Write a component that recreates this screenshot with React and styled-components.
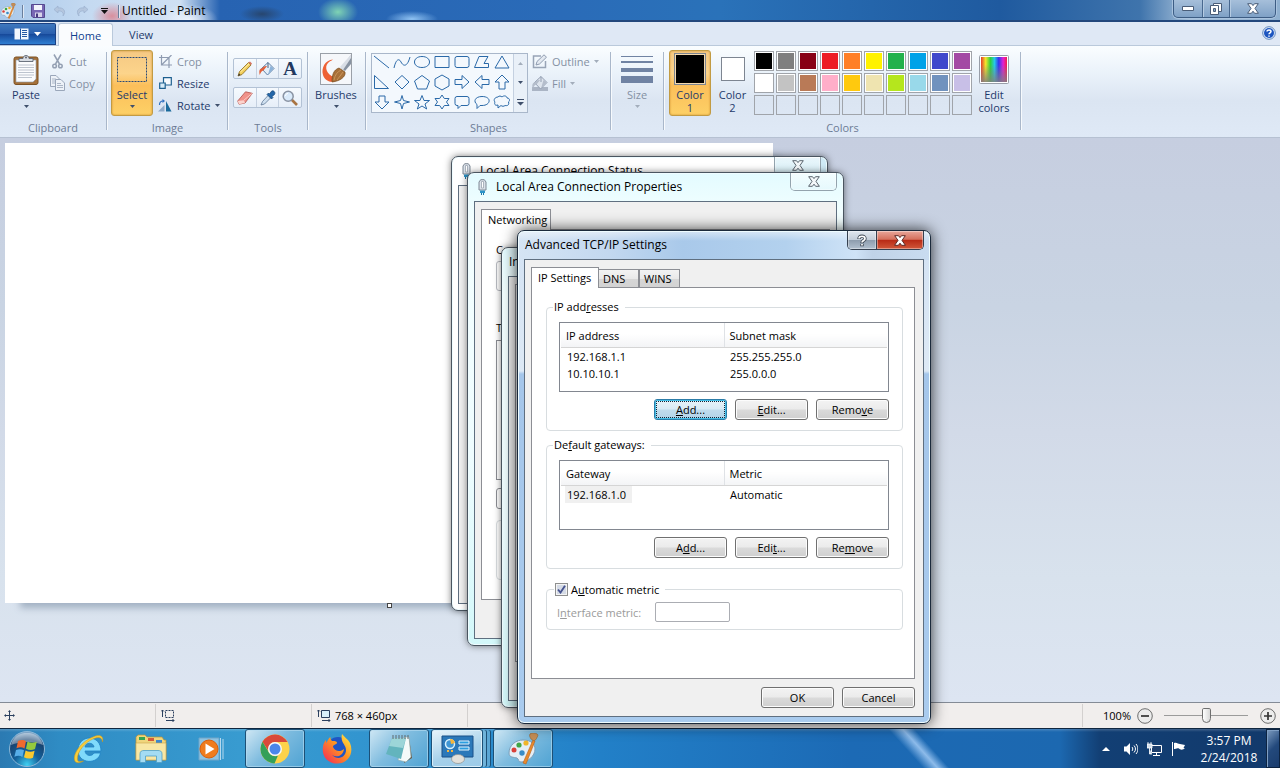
import React from "react";
import styled, { createGlobalStyle, css } from "styled-components";

const Global = createGlobalStyle`
  *, *::before, *::after { box-sizing: border-box; }
  html, body { margin: 0; height: 100%; overflow: hidden; }
  #root { height: 100%; }
  body, button, input {
    font-family: "Open Sans", "Noto Sans", sans-serif;
    font-size: 11px;
    line-height: 13px;
    color: #000;
  }
  button { padding: 0; margin: 0; border: 0; background: none; }
  svg { display: block; flex: none; }
`;

const Desktop = styled.div`
  position: relative;
  display: flex;
  flex-direction: column;
  height: 100%;
  overflow: hidden;
`;

/* ---------- Paint title bar ---------- */

const TitleBar = styled.header`
  display: flex;
  justify-content: space-between;
  height: 22px;
  flex: none;
  border-bottom: 2px solid #23477c;
  background:
    radial-gradient(ellipse 30px 16px at 188px 20px, #eef4fc, transparent),
    radial-gradient(ellipse 20px 14px at 112px 16px, #d98f9d, transparent),
    radial-gradient(ellipse 20px 14px at 338px 12px, #7fd3b4, transparent),
    radial-gradient(ellipse 26px 8px at 412px 19px, #8fc2f2, transparent),
    radial-gradient(ellipse 22px 8px at 262px 14px, #27466f, transparent),
    linear-gradient(90deg, #a9c8ea 0, #c5daf1 90px, #cfe0f3 180px, #2763b2 220px, #2a6bb8 560px, #2a72b9 720px, #1f5a9f 1000px, #3f74ac 1140px, #a5bfd9 1190px, #8fb0d0 100%);
`;

const QuickAccess = styled.div`
  display: flex;
  align-items: center;
  gap: 6px;
  padding-top: 2px;
`;

const QuickButton = styled.button`
  display: flex;
  width: 16px;
  justify-content: center;
`;

const QuickDivider = styled.span`
  width: 2px;
  height: 13px;
  background: linear-gradient(90deg, #6a7f9d 50%, #dfe9f5 50%);
`;

const AppTitle = styled.h1`
  margin: 0;
  margin-left: -4px;
  font-size: 12px;
  font-weight: 400;
  line-height: 16px;
  white-space: nowrap;
`;

const Caption = styled.div`
  display: flex;
  height: 18px;
  margin-right: 4px;
  border: 1px solid #3d5d84;
  border-top: 0;
  border-radius: 0 0 5px 5px;
  overflow: hidden;
  background: linear-gradient(#a6bfda, #7fa1c6);
  box-shadow: 0 0 0 1px #a9c3df;
`;

const CaptionButton = styled.button`
  display: flex;
  align-items: center;
  justify-content: center;
  width: ${(p) => p.$w}px;
  & + & { border-left: 1px solid #48688f; box-shadow: inset 1px 0 #b5cbe2; }
`;

/* ---------- Ribbon ---------- */

const TabStrip = styled.nav`
  display: flex;
  align-items: flex-end;
  height: 24px;
  flex: none;
  background: #dfe8f5;
  border-bottom: 1px solid #bac9db;
`;

const FileButton = styled.button`
  display: flex;
  align-items: center;
  justify-content: center;
  gap: 5px;
  width: 56px;
  height: 22px;
  border: 1px solid #1a4184;
  border-left: 0;
  border-radius: 0 2px 0 0;
  background: linear-gradient(#3f78bd, #2a5fae 48%, #174a9b 52%, #2f7fd2);
`;

const RibbonTab = styled.button`
  height: 23px;
  margin: 0 0 -1px 2px;
  padding: 0 ${(p) => (p.$active ? 11 : 13)}px;
  color: #1e3a6b;
  border: 1px solid transparent;
  ${(p) =>
    p.$active &&
    css`
      color: #10408f;
      background: #fafcfe;
      border-color: #bac9db;
      border-bottom: 0;
      border-radius: 3px 3px 0 0;
    `}
`;

const HelpButton = styled.button`
  margin: 0 4px 5px auto;
`;

const Ribbon = styled.section`
  display: flex;
  align-items: stretch;
  height: 92px;
  flex: none;
  padding-top: 4px;
  border-bottom: 1px solid #b6c1d2;
  background: linear-gradient(#fafdff 0, #eaf2fa 30%, #dbe5f2 60%, #dfe9f6 100%);
`;

const Group = styled.div`
  display: flex;
  flex-direction: column;
  width: ${(p) => p.$w}px;
  flex: none;
`;

const GroupBody = styled.div`
  display: flex;
  height: 66px;
  padding-left: ${(p) => p.$pad ?? 4}px;
  gap: ${(p) => p.$gap ?? 4}px;
  align-items: flex-start;
`;

const GroupLabel = styled.div`
  padding-top: 5px;
  text-align: center;
  color: #6d7c95;
`;

const Separator = styled.div`
  width: 2px;
  height: 78px;
  margin-top: 2px;
  flex: none;
  background: linear-gradient(90deg, #a9b7ca 50%, #f7fafd 50%);
`;

const BigButton = styled.button`
  display: flex;
  flex-direction: column;
  align-items: center;
  width: ${(p) => p.$w ?? 42}px;
  height: 66px;
  padding-top: 2px;
  color: ${(p) => (p.$dim ? "#8490a3" : "#1e3a6b")};
  border: 1px solid transparent;
  border-radius: 3px;
  ${(p) =>
    p.$active &&
    css`
      border-color: #c29b43;
      background: linear-gradient(#f5c983 0, #fcd48b 35%, #fbbf5a 54%, #fdd066 100%);
      box-shadow: inset 0 0 2px #c98a2b;
    `}
`;

const BigIcon = styled.span`
  display: flex;
  align-items: center;
  justify-content: center;
  height: 32px;
  margin-bottom: 3px;
`;

const ArrowGap = styled.span`
  display: block;
  padding-top: 4px;
`;

const SmallStack = styled.div`
  display: flex;
  flex-direction: column;
`;

const SmallButton = styled.button`
  display: flex;
  align-items: center;
  gap: 4px;
  height: 22px;
  color: ${(p) => (p.$dim ? "#8490a3" : "#1e3a6b")};
`;

const SmallIcon = styled.span`
  display: flex;
  justify-content: center;
  width: 16px;
`;

const ToolGrid = styled.div`
  display: flex;
  flex-direction: column;
  gap: 8px;
  padding-top: 8px;
`;

const ToolRow = styled.div`
  display: flex;
  width: 69px;
  height: 21px;
  border: 1px solid #b3c2d5;
  border-radius: 2px;
  background: linear-gradient(#f6fafe, #e6eef8);
`;

const Tool = styled.button`
  display: flex;
  flex: 1;
  align-items: center;
  justify-content: center;
  & + & { border-left: 1px solid #c4d0e0; }
`;

const LetterTool = styled.span`
  font: 700 19px/19px "Liberation Serif", serif;
  color: #22385f;
`;

const Gallery = styled.div`
  display: flex;
  width: 157px;
  height: 60px;
  margin-top: 3px;
  border: 1px solid #a9b7ca;
  background: #f3f8fd;
`;

const ShapeGrid = styled.div`
  display: grid;
  grid-template-columns: repeat(7, 20px);
  grid-auto-rows: 20px;
  flex: 1;
`;

const ShapeButton = styled.button`
  display: flex;
  justify-content: center;
`;

const GalleryScroll = styled.div`
  display: flex;
  flex-direction: column;
  width: 14px;
  border-left: 1px solid #c4d0e0;
`;

const ScrollButton = styled.button`
  display: flex;
  flex: 1;
  align-items: center;
  justify-content: center;
  background: #e9f0f8;
`;

const Swatch = styled.span`
  width: ${(p) => p.$size}px;
  height: ${(p) => p.$size}px;
  border: 1px solid #7d8591;
  box-shadow: inset 0 0 0 1px ${(p) => (p.$size > 30 ? "#f3d9ae" : "#fff")};
  background: ${(p) => p.$color};
`;

const Palette = styled.div`
  display: grid;
  grid-template-columns: repeat(10, 20px);
  grid-auto-rows: 20px;
  gap: 2px;
  padding-top: 1px;
`;

const PaletteCell = styled.button`
  border: 1px solid #a0a4aa;
  ${(p) => p.$color && css`background: ${p.$color}; box-shadow: inset 0 0 0 1px #fff;`}
`;

/* ---------- Work area and status bar ---------- */

const WorkArea = styled.main`
  flex: 1;
  min-height: 0;
  padding: 5px;
  overflow: hidden;
  background: linear-gradient(#c6cee0 0, #c9d4e3 30%, #d2dae8 52%, #d8e2ed 78%, #dde5f2 100%);
`;

const Sheet = styled.div`
  position: relative;
  width: 768px;
  height: 460px;
  background: #fff;
  box-shadow: 11px 9px 7px -4px #a3b2c3;
`;

const SheetHandle = styled.span`
  position: absolute;
  top: 100%;
  left: calc(50% - 2px);
  width: 5px;
  height: 5px;
  border: 1px solid #444;
  background: #fff;
`;

const StatusBar = styled.footer`
  display: flex;
  align-items: center;
  height: 27px;
  flex: none;
  border-top: 1px solid #848b96;
  border-bottom: 1px solid #10263f;
  background: #f1eeed;
`;

const StatusCell = styled.div`
  display: flex;
  align-items: center;
  gap: 4px;
  width: 156px;
  height: 23px;
  padding-left: ${(p) => p.$pad ?? 5}px;
  border-right: 1px solid #d3d0cf;
`;

const ZoomArea = styled.div`
  display: flex;
  align-items: center;
  gap: 6px;
  height: 23px;
  margin-left: auto;
  padding: 0 4px 0 20px;
  border-left: 1px solid #d3d0cf;
`;

const ZoomSlider = styled.input`
  appearance: none;
  width: 84px;
  height: 16px;
  margin: 0 6px 0 5px;
  background: linear-gradient(#9b9b9b, #9b9b9b) center / 100% 1px no-repeat;
  &::-webkit-slider-thumb {
    appearance: none;
    width: 9px;
    height: 15px;
    border: 1px solid #6f6f6f;
    border-radius: 2px 2px 5px 5px;
    background: linear-gradient(90deg, #fff, #d8d8d8);
  }
`;

/* ---------- Taskbar ---------- */

const Taskbar = styled.footer`
  display: flex;
  align-items: stretch;
  height: 39px;
  flex: none;
  background:
    linear-gradient(#ffffff30, #ffffff00 3px),
    linear-gradient(48deg, transparent 70.2%, #8dbbea 71.3%, transparent 72.2%),
    linear-gradient(90deg, #2b7ab2 0, #2f8cc4 60px, #389bd0 240px, #2f92cf 420px, #2280c8 600px, #1c6ab5 850px, #1c68b0 1060px, #123f74 1100px, #12396b 100%);
`;

const TaskButton = styled.button`
  display: flex;
  align-items: center;
  justify-content: center;
  width: ${(p) => p.$w}px;
  margin-right: ${(p) => p.$gap ?? 0}px;
  ${(p) =>
    p.$open &&
    css`
      border: 1px solid #1c5077;
      border-radius: 3px;
      box-shadow: inset 0 0 0 1px #b5dcf0a0;
      background: linear-gradient(135deg, #cfe7f4 0, #7fbcdf 45%, #4fa3d3 100%);
    `}
  ${(p) => p.$lit && css`background: linear-gradient(160deg, #eaf5fb, #a5d0ea 60%, #9ccbe8);`}
  ${(p) =>
    p.$stacked &&
    css`
      box-shadow: inset 0 0 0 1px #d9eef9, 4px 0 0 -1px #6fb3da, 5px 0 0 -1px #1c5077, 8px 0 0 -1px #5ba7d5, 9px 0 0 -1px #1c5077;
    `}
`;

const Tray = styled.div`
  display: flex;
  align-items: center;
  margin-left: auto;
`;

const TrayButton = styled.button`
  display: flex;
  justify-content: center;
  width: 24px;
`;

const Clock = styled.time`
  width: 66px;
  margin: 0 4px 0 6px;
  font-size: 12px;
  line-height: 17px;
  text-align: center;
  color: #fff;
`;

const ShowDesktop = styled.button`
  align-self: stretch;
  width: 14px;
  border: 1px solid #0c2341;
  background: linear-gradient(135deg, #7d9cc0, #23497c 50%, #1a3c6d);
  box-shadow: inset 1px 1px #7f9fc4;
`;

/* ---------- Windows ---------- */

const Win = styled.section`
  position: absolute;
  left: ${(p) => p.$x}px;
  top: ${(p) => p.$y}px;
  width: ${(p) => p.$w}px;
  height: ${(p) => p.$h}px;
  display: flex;
  flex-direction: column;
  padding: 0 6px 6px;
  border: 1px solid #4a5560;
  border-radius: 7px;
  background: ${(p) => p.$glass};
  box-shadow: inset 0 0 0 1px #effcff, 0 0 ${(p) => (p.$active ? 15 : 7)}px ${(p) => (p.$active ? "#000000c8" : "#00000080")};
  ${(p) => p.$active && css`border-color: #1b2a3b;`}
`;

const WinTitle = styled.header`
  display: flex;
  justify-content: space-between;
  height: 28px;
  flex: none;
`;

const WinName = styled.h2`
  display: flex;
  align-items: center;
  gap: 8px;
  margin: 0;
  padding-left: ${(p) => (p.$icon ? 3 : 1)}px;
  font-size: 12px;
  font-weight: 400;
  line-height: 16px;
  white-space: nowrap;
`;

const WinButtons = styled.div`
  display: flex;
  height: ${(p) => (p.$pale ? 18 : 19)}px;
  border: 1px solid ${(p) => (p.$pale ? "#93a3ad" : "#35404f")};
  border-top: 0;
  border-radius: 0 0 5px 5px;
  overflow: hidden;
`;

const WinButton = styled.button`
  display: flex;
  align-items: center;
  justify-content: center;
  width: ${(p) => p.$w}px;
  background: ${(p) => p.$bg};
  box-shadow: inset 0 0 0 1px #ffffff60;
  & + & { border-left: 1px solid #35404f; }
`;

const WinBody = styled.div`
  display: flex;
  flex-direction: column;
  flex: 1;
  min-height: 0;
  padding: ${(p) => p.$pad ?? "7px 8px"};
  border: 1px solid #5f6f80;
  background: #f0f0f0;
`;

const Tabs = styled.div`
  display: flex;
  align-items: flex-end;
  height: 20px;
  flex: none;
`;

const Tab = styled.button`
  height: 18px;
  width: ${(p) => p.$w}px;
  padding: 0 0 0 4px;
  text-align: left;
  border: 1px solid #8c8e94;
  border-bottom: 0;
  border-left-width: ${(p) => (p.$first ? 0 : 1)}px;
  background: linear-gradient(#f3f3f3, #e9e9e9 50%, #d6d6d6 52%, #d3d3d3);
  ${(p) =>
    p.$active &&
    css`
      position: relative;
      height: 21px;
      margin-bottom: -1px;
      padding-left: 6px;
      padding-bottom: 2px;
      border-left-width: 1px;
      background: #fff;
    `}
`;

const TabPage = styled.div`
  display: flex;
  flex-direction: column;
  flex: 1;
  min-height: 0;
  padding: 12px 11px 0 14px;
  border: 1px solid #8c8e94;
  background: #fff;
`;

const Fields = styled.fieldset`
  min-width: 0;
  margin: 0 0 ${(p) => p.$after ?? 7}px;
  padding: ${(p) => p.$pad ?? "8px 13px 10px 12px"};
  border: 1px solid #d8dde0;
  border-radius: 4px;
`;

const Legend = styled.legend`
  height: 14px;
  margin-left: -6px;
  padding: 0 6px 0 1px;
`;

const CheckLegend = styled(Legend)`
  display: flex;
  align-items: center;
  gap: 3px;
  margin-left: -3px;
`;

const ListBox = styled.div`
  height: 70px;
  padding: 0 1px;
  border: 1px solid #828790;
`;

const List = styled.table`
  width: 100%;
  border-collapse: collapse;
  table-layout: fixed;
  th, td { padding: 0 0 0 5px; text-align: left; font-weight: 400; }
  th {
    height: 24px;
    padding-top: 2px;
    border-bottom: 1px solid #d5d5d5;
    background: linear-gradient(#fff 45%, #f3f4f6);
  }
  th + th { border-left: 1px solid #dfe2e6; padding-left: 5px; }
  td { height: 17px; }
`;

const Cell = styled.span`
  display: inline-block;
  padding: 2px 6px 2px 2px;
  margin-left: -1px;
  background: ${(p) => (p.$selected ? "#f0f0f0" : "transparent")};
`;

const ButtonRow = styled.div`
  display: flex;
  justify-content: flex-end;
  gap: 8px;
  padding-top: ${(p) => p.$top ?? 7}px;
`;

const PushButton = styled.button`
  width: 73px;
  height: 21px;
  border: 1px solid #707070;
  border-radius: 3px;
  background: linear-gradient(#f3f3f3, #ebebeb 48%, #dadada 52%, #cfcfcf);
  box-shadow: inset 0 0 0 1px #fcfcfc;
  ${(p) =>
    p.$focused &&
    css`
      border-color: #2c7ca8;
      background: linear-gradient(#e8f3f9, #d9ebf5 48%, #c0dced 52%, #b2d3e8);
      box-shadow: inset 0 0 0 1px #45c0e8;
      outline: 1px dotted #123;
      outline-offset: -3px;
    `}
`;

const Check = styled.input`
  appearance: none;
  width: 13px;
  height: 13px;
  margin: 0;
  border: 1px solid #8e8f8f;
  box-shadow: inset 0 0 0 1px #f4f4f4;
  background: #d5dbe6;
  & + svg { visibility: hidden; }
  &:checked + svg { visibility: visible; }
`;

const CheckBox = styled.span`
  display: grid;
  > * { grid-area: 1 / 1; }
  svg { pointer-events: none; place-self: center; }
`;

const MetricRow = styled.label`
  display: flex;
  align-items: center;
  gap: 14px;
  color: #9a9a9a;
`;

const MetricInput = styled.input`
  width: 75px;
  height: 20px;
  padding: 0 4px;
  border: 1px solid #abadb3;
  border-radius: 2px;
  background: #fff;
`;

const BackPage = styled.div`
  display: flex;
  flex-direction: column;
  flex: 1;
  padding: 13px 0 0 14px;
  border: 1px solid #8c8e94;
  background: #fff;
`;

const BackText = styled.div`
  margin-top: ${(p) => p.$top ?? 0}px;
`;

const BackBox = styled.div`
  height: ${(p) => p.$h}px;
  margin-top: ${(p) => p.$top}px;
  border: 1px solid ${(p) => p.$line ?? "#8c8e94"};
  border-radius: ${(p) => p.$r ?? 0}px;
`;

/* ---------- Drawings ---------- */

const Arrow = ({ color = "#3f4f6b", up }) => (
  <svg width="5" height="3" viewBox="0 0 5 3">
    <path d={up ? "M0 3h5L2.500 0z" : "M0 0h5L2.500 3z"} fill={color} />
  </svg>
);

const Cross = ({ fill = "#fff", stroke = "#4d5560" }) => (
  <svg width="12" height="11" viewBox="0 0 12 11">
    <path d="M.7.7H4.500L6 2.600 7.500.7h3.800L8 5.400l3.400 4.900H7.600L6 8.200 4.400 10.300H.6L4 5.400z" fill={fill} stroke={stroke} />
  </svg>
);

const PaletteArt = ({ size = 16 }) => (
  <svg width={size} height={size} viewBox="0 0 32 32">
    <path d="M2 20C2 12 9 7 16 7c8 0 12 4 12 9 0 7-7 13-14 13-3 0-2-3-4-4-3-1-8 0-8-5z" fill="#e4eef6" stroke="#7d9fb9" />
    <circle cx="7" cy="17" r="2.500" fill="#d9403a" />
    <circle cx="12" cy="12" r="2.600" fill="#3fa648" />
    <circle cx="19" cy="10" r="2.600" fill="#f0b52a" />
    <circle cx="15" cy="20" r="2.700" fill="#3a8cc6" />
    <path d="M16 30 26 7l2 1-9 23z" fill="#e98a2c" stroke="#b9601a" strokeWidth=".6" />
    <path d="M23 1c2-2 7-1 8 1-1 3-2 5-4 6l-3-2c-1-2-2-3-1-5z" fill="#c58e56" stroke="#94622f" strokeWidth=".6" />
  </svg>
);

const SaveArt = () => (
  <svg width="14" height="14" viewBox="0 0 14 14">
    <path d="M.5.5h13v13H2L.5 12z" fill="#7867b4" stroke="#56488f" />
    <path d="M3 1h8v5H3z" fill="#f3f3fb" />
    <path d="M4 8.500h7V13H4z" fill="#d7d3ea" />
    <path d="M5 9.500h2V13H5z" fill="#473a80" />
  </svg>
);

const UndoArt = ({ flip }) => (
  <svg width="14" height="12" viewBox="0 0 14 12">
    <path d={flip ? "M9 1l4 3.500L9 8V6C5 5.500 3 8 4 11 0 6 4 2 9 3z" : "M5 1 1 4.500 5 8V6c4-.5 6 2 5 5 4-5 0-9-5-8z"} fill="#b4c6de" stroke="#9bb0ce" strokeWidth=".7" />
  </svg>
);

const FileArt = () => (
  <svg width="15" height="12" viewBox="0 0 15 12">
    <path d="M.5.500h14v11H.5z" fill="#f2f7fe" />
    <path d="M6.500 .5v11" stroke="#2458a4" />
    <path d="M8 2.500h5M8 4.500h5M8 6.500h5M8 8.500h5" stroke="#2458a4" />
  </svg>
);

const HelpArt = () => (
  <svg width="14" height="14" viewBox="0 0 14 14">
    <circle cx="7" cy="7" r="6.300" fill="#e8f1fc" stroke="#5f86bd" />
    <circle cx="7" cy="7" r="5" fill="#1d55c0" />
    <path d="M5 5.500C5 3.300 9 3.400 9 5.500 9 6.700 7 6.900 7 8.200M7 9.600v1.200" fill="none" stroke="#fff" strokeWidth="1.500" />
  </svg>
);

const PasteArt = () => (
  <svg width="26" height="31" viewBox="0 0 26 31">
    <rect x="1" y="3" width="24" height="27.500" rx="2" fill="#a5713a" stroke="#7d5224" />
    <path d="M3 6h20v19l-3 3H3z" fill="#fbfcfe" stroke="#8b97a8" strokeWidth=".6" />
    <path d="M5 11h16M5 13.500h16M5 16h16M5 18.500h16M5 21h16M5 23.500h14" stroke="#b5bdc9" strokeWidth=".9" />
    <path d="M6 7.500V4.500h4C10 .5 16 .5 16 4.500h4v3z" fill="#d8dde4" stroke="#5d6673" strokeWidth=".9" />
    <circle cx="13" cy="3.600" r="1" fill="#5d6673" />
  </svg>
);

const CutArt = () => (
  <svg width="11" height="15" viewBox="0 0 11 15" fill="none" stroke="#94a0b3" strokeWidth="1.500">
    <path d="M2 .5 7.500 10M9 .5 3.500 10" />
    <circle cx="2.600" cy="12" r="1.800" />
    <circle cx="8.400" cy="12" r="1.800" />
  </svg>
);

const CopyArt = () => (
  <svg width="15" height="16" viewBox="0 0 15 16" fill="#edf2f8" stroke="#9aa7ba">
    <path d="M.5.5h5.500L9.500 4v7.500h-9z" />
    <path d="M2 4h4M2 6h4M2 8h3" strokeWidth=".8" />
    <path d="M5.500 4.500H11L14.500 8v7.500h-9z" />
    <path d="M7 8.500h4M7 10.500h6M7 12.500h6" strokeWidth=".8" />
  </svg>
);

const SelectArt = () => (
  <svg width="30" height="25" viewBox="0 0 30 25">
    <rect x=".5" y=".5" width="29" height="24" fill="none" stroke="#2a4a76" strokeDasharray="2 1" />
  </svg>
);

const CropArt = () => (
  <svg width="13" height="13" viewBox="0 0 13 13" fill="none" stroke="#8f9cb1" strokeWidth="1.200">
    <path d="M2.500 0v10H13M0 2.500h10V13M3 9.500 12.500 0" />
  </svg>
);

const ResizeArt = () => (
  <svg width="13" height="12" viewBox="0 0 13 12" fill="#f6fafe" stroke="#1d6090" strokeWidth="1.200">
    <path d="M4.500.7h7.800V8H4.500z" />
    <path d="M.7 6h5.500v5.300H.7z" fill="#d6ebf8" />
  </svg>
);

const RotateArt = () => (
  <svg width="14" height="13" viewBox="0 0 14 13">
    <path d="M0 12.500h6.500V6z" fill="#8faac9" />
    <path d="M8 12.500V2l5.500 10.500z" fill="#1a6a9c" />
    <path d="M1.500 6C1.500 3 3 2 5 2" fill="none" stroke="#2f6fc0" strokeWidth="1.200" />
    <path d="M4.500 0 7 2 4.500 4z" fill="#2f6fc0" />
  </svg>
);

const PencilArt = () => (
  <svg width="16" height="16" viewBox="0 0 16 16">
    <path d="M1 15l1.500-4.500L11.500 1.500 14 4 5 13.500z" fill="#f2cf5b" stroke="#8c6a1c" strokeWidth=".8" />
    <path d="M11.500 1.500 13 .5 15 2.500 14 4z" fill="#d87565" />
    <path d="M1 15l1-2.800L3.500 14z" fill="#333" />
    <path d="M3.500 11 12 2.800" stroke="#fff0b5" />
  </svg>
);

const BucketArt = ({ dim }) => (
  <svg width="17" height="16" viewBox="0 0 17 16">
    {dim && <path d="M0 12h16v4H0z" fill="#aab4c4" />}
    <path d="M2.500 7.500 9 1.500l6 6-6.500 6.500z" fill={dim ? "#dde4ed" : "#e4eef8"} stroke={dim ? "#929eb1" : "#5e7fa6"} />
    <path d="M9 1.500V7" stroke={dim ? "#929eb1" : "#46617f"} />
    <path d="M9 13.500l5.500-6-3-2.500z" fill={dim ? "#b4bdcb" : "#8cb3da"} />
    <path d="M2.500 7.500C0 8 0 11 .8 14c1-2.500 1.500-4 3.700-4.500L8 5C6 4.500 4 6 2.500 7.500z" fill={dim ? "#b4bdcb" : "#e2603a"} />
  </svg>
);

const EraserArt = () => (
  <svg width="16" height="14" viewBox="0 0 16 14">
    <path d="M.7 10 8.500.8l6.800 1.500L8 12 2 13.200z" fill="#f0928a" stroke="#b0524b" strokeWidth=".8" />
    <path d="M.7 10 7 9.200 8 12l-6 1.200z" fill="#fbd3cd" />
    <path d="M7 9 15 2.500" stroke="#fcc6bf" />
  </svg>
);

const DropperArt = () => (
  <svg width="16" height="16" viewBox="0 0 16 16">
    <path d="M1 15l1.500-3.500L8.500 5l2.500 2.500L4.500 14z" fill="#cfe0f0" stroke="#5f7796" strokeWidth=".8" />
    <path d="M7 4.500 8.500 3l1 1 2-2.800C13 0 16 2 14.500 4.500L12 6.500l1 1L11.500 9z" fill="#2467a9" stroke="#174675" strokeWidth=".7" />
  </svg>
);

const LensArt = () => (
  <svg width="16" height="16" viewBox="0 0 16 16">
    <path d="M9.500 9.500 15 15" stroke="#a97442" strokeWidth="2.600" />
    <circle cx="6.200" cy="6.200" r="5" fill="#d9eafa" stroke="#8993a3" strokeWidth="1.500" />
    <path d="M3.500 6c0-1.500 1-2.500 2.500-2.500" stroke="#fff" fill="none" />
  </svg>
);

const BrushArt = () => (
  <svg width="32" height="32" viewBox="0 0 32 32">
    <rect x=".5" y=".5" width="31" height="31" fill="#f5f7fa" stroke="#9aa0a8" />
    <path d="M13 6.500C5 7 1 15 3 22c1 4 6 8 11 6.500 4-1 3-4 0-4.500C7 22 4 14 8 10c2-2 3-2 5-3.500z" fill="#ee6134" />
    <path d="M21 15 31 2v9l-6 7z" fill="#8893a2" />
    <path d="M20 14 31 1.500V5l-8 12z" fill="#d9dee6" />
    <path d="M12 29c0-6 1-12 7-14l6 4c1 5-5 9-13 10z" fill="#a8713a" stroke="#744719" strokeWidth=".7" />
    <path d="M14 27c1-5 3-8 7-10M17 27c2-3 4-5 6-8" stroke="#c99459" fill="none" />
  </svg>
);

const OutlineArt = () => (
  <svg width="16" height="15" viewBox="0 0 16 15">
    <path d="M13.500 7v6.500h-12V2H9" fill="none" stroke="#98a4b6" strokeWidth="1.500" />
    <path d="M4 11l1-3.500L12 .8l2.500 2.400L7.500 10z" fill="#e3e9f1" stroke="#8f9cb0" />
  </svg>
);

const SizeArt = () => (
  <svg width="32" height="27" viewBox="0 0 32 27" fill="#7083a3">
    <path d="M0 0h32v1H0zM0 5h32v2H0zM0 12h32v4H0zM0 20h32v7H0z" />
  </svg>
);

const EditColorsArt = () => (
  <svg width="30" height="29" viewBox="0 0 30 29">
    <defs>
      <linearGradient id="hue">
        <stop offset="0" stopColor="#e23b2a" />
        <stop offset=".18" stopColor="#f5e62c" />
        <stop offset=".36" stopColor="#2fd03a" />
        <stop offset=".52" stopColor="#25c9e8" />
        <stop offset=".68" stopColor="#3434ee" />
        <stop offset=".85" stopColor="#e021d6" />
        <stop offset="1" stopColor="#f01d48" />
      </linearGradient>
      <linearGradient id="fade" x2="0" y2="1">
        <stop offset=".3" stopColor="#808080" stopOpacity="0" />
        <stop offset="1" stopColor="#808080" stopOpacity=".85" />
      </linearGradient>
    </defs>
    <rect x=".5" y=".5" width="29" height="28" rx="1" fill="#fff" stroke="#989ea8" />
    <path d="M2 2h26v25H2z" fill="url(#hue)" />
    <path d="M2 2h26v25H2z" fill="url(#fade)" />
  </svg>
);

const shapes = [
  "M1 2l15 12",
  "M1 14C3 5 6 4 8 8s6 6 9-5",
  "M9 2.500c10 0 10 11 0 11s-10-11 0-11z",
  "M2 2.500h14v11H2z",
  "M4 2.500h10a2 2 0 0 1 2 2v7a2 2 0 0 1-2 2H4a2 2 0 0 1-2-2v-7a2 2 0 0 1 2-2z",
  "M1.500 13.500 6 2.500h9l-4 7h4.500v4z",
  "M9 2l7 12H2z",
  "M1.500 1.500v13h14z",
  "M9 1.500 16 8l-7 7-7-7z",
  "M9 1.500 16.500 7l-3 8h-9l-3-8z",
  "M9 1l7 4v7l-7 4-7-4V5z",
  "M2 5.500h7V1.500L16 8l-7 6.500v-4H2z",
  "M16 5.500H9V1.500L2 8l7 6.500v-4h7z",
  "M9 1l7 7h-4v7H6V8H2z",
  "M6 2h6v6h4l-7 7-7-7h4z",
  "M9 1.500l1.500 5 6 1.500-6 1.500L9 15l-1.500-5.500-6-1.500 6-1.500z",
  "M9 1.500l2 5h5.500L12 10l1.700 5L9 12l-4.700 3L6 10 1.500 6.500H7z",
  "M9 1l2.300 3.500H16L13.500 8l2.500 3.500h-4.700L9 15l-2.300-3.500H2L4.500 8 2 4.500h4.700z",
  "M4 2.500h10a2 2 0 0 1 2 2v5a2 2 0 0 1-2 2H8l-3 3v-3H4a2 2 0 0 1-2-2v-5a2 2 0 0 1 2-2z",
  "M9 2.500c10 0 9 9 0 9H7l-3 3v-4C0 7.500 2 2.500 9 2.500z",
  "M5 3c1-1.500 3-1 4 0 2-2 5-1 5 1 3 0 3 3 1.500 4 1 3-1 4-3.500 3.500-1 1-3 1-4 0L5 14v-3c-3 1-4-1-3-3C0 6 2 3 5 3z",
];

const MoveArt = () => (
  <svg width="11" height="11" viewBox="0 0 11 11" stroke="#2a3f5e" fill="#2a3f5e">
    <path d="M5.500 1v9M1 5.500h9" />
    <path d="M4 2 5.500 0 7 2zM4 9l1.500 2L7 9zM2 4 0 5.500 2 7zM9 4l2 1.500L9 7z" stroke="none" />
  </svg>
);

const DimsArt = ({ dashed }) => (
  <svg width="14" height="13" viewBox="0 0 14 13" fill="none" stroke="#2a3f5e">
    <path d="M1.500 1v7M0 2.500 1.500 1 3 2.500M5 11.500h8M11.500 10 13 11.500 11.500 13" />
    <path d="M4.500 1.500h8v7h-8z" strokeDasharray={dashed ? "2 1" : "none"} fill={dashed ? "none" : "#d9effa"} />
  </svg>
);

const ZoomArt = ({ plus }) => (
  <svg width="16" height="16" viewBox="0 0 16 16">
    <circle cx="8" cy="8" r="7.300" fill="#ececec" stroke="#6e6e6e" />
    <path d={plus ? "M4 8h8M8 4v8" : "M4 8h8"} stroke="#333" strokeWidth="1.700" />
  </svg>
);

const StartArt = () => (
  <svg width="38" height="38" viewBox="0 0 38 38">
    <defs>
      <radialGradient id="orb" cx=".5" cy=".95" r=".9">
        <stop offset="0" stopColor="#3fd0f2" />
        <stop offset=".4" stopColor="#14629c" />
        <stop offset=".8" stopColor="#17426f" />
        <stop offset="1" stopColor="#7ea3c4" />
      </radialGradient>
    </defs>
    <circle cx="19" cy="19" r="17.500" fill="url(#orb)" stroke="#8db8d8" />
    <path d="M3 15C6 5 13 3 19 3s13 2 16 12c-9-4-23-4-32 0z" fill="#fff" opacity=".38" />
    <path d="M10 11c3-1.500 6-1.200 8 .2l-1.500 7.300c-2.500-1.500-5-1.500-8-.3z" fill="#ee6a2f" />
    <path d="M19.500 11.500c3 1.700 6 1.500 9.300.3L27 19c-3 1.300-6 1.200-9-.3z" fill="#94c93d" />
    <path d="M8 20c3-1.200 5.500-1 8 .3L14.400 27c-2.500-1.600-5-1.600-8-.3z" fill="#58aee8" />
    <path d="M17.600 20.500c3 1.600 6 1.500 9 .3L25 27.700c-3 1.300-6 1.200-9-.4z" fill="#fbc92f" />
  </svg>
);

const IeArt = () => (
  <svg width="32" height="32" viewBox="0 0 32 32">
    <path d="M16.500 5C23 5 28 10 28 18H12c.5 5 7 6 9 2h6.500C25 32 5 31 5 17.500 5 10 10 5 16.500 5zM12 14h9c-.5-5-8.500-5-9 0z" fill="#7fdafb" stroke="#1e82c4" strokeWidth=".8" />
    <path d="M29.500 9C31 3 27 1 20 4 9 8 0 20 1.500 27c1 4 6 3 9 1-4 1-6 1-6-2C4 19 12 9 21 5.500c5-2 8-1 8.500 3.500z" fill="#f8ce3a" stroke="#c9951c" strokeWidth=".5" />
  </svg>
);

const ExplorerArt = () => (
  <svg width="32" height="30" viewBox="0 0 32 30">
    <path d="M1 26V3l2-2h7l2 2h15l2 3h2v20z" fill="#f0d57c" stroke="#b79238" strokeWidth=".7" />
    <path d="M4 3h6v3H4z" fill="#35a554" />
    <path d="M13 4h6v3h-6z" fill="#d55a3a" />
    <path d="M21 6h6v3h-6z" fill="#3b88cf" />
    <path d="M1 9h30v17H1z" fill="#f8e7a5" stroke="#c9a54c" strokeWidth=".6" />
    <path d="M5 28.500V20c0-3 2-3.500 4-3.500h14c2 0 4 .5 4 3.500v8.500h-5.500V22h-11v6.500z" fill="#a4dcf3" stroke="#4f9fc6" strokeWidth=".8" />
  </svg>
);

const MediaArt = () => (
  <svg width="28" height="24" viewBox="0 0 28 24">
    <path d="M1 1h20v22H1z" fill="#8fc3e2" stroke="#6ea5c8" />
    <path d="M22.500 1v22M25 2v20" stroke="#b6d9ee" />
    <circle cx="11" cy="12" r="9" fill="#f07c1d" stroke="#d85f0c" />
    <path d="M7.500 6.500v11l9-5.500z" fill="#fff" />
  </svg>
);

const ChromeArt = () => (
  <svg width="30" height="30" viewBox="0 0 30 30">
    <circle cx="15" cy="15" r="14.500" fill="#fdd24a" />
    <path d="M2.500 7.700A14.500 14.500 0 0 1 27.600 8H15a7 7 0 0 0-6.500 9z" fill="#d9493a" />
    <path d="M2.500 7.700 9 18.500a7 7 0 0 0 9 3L14.500 29.500A14.500 14.500 0 0 1 2.500 7.700z" fill="#33a05a" />
    <circle cx="15" cy="15" r="7" fill="#f5f8fc" />
    <circle cx="15" cy="15" r="5.500" fill="#4b86ea" />
  </svg>
);

const FirefoxArt = () => (
  <svg width="31" height="31" viewBox="0 0 31 31">
    <defs>
      <linearGradient id="fx" x1="1" x2="0" y2="1">
        <stop offset="0" stopColor="#fff04a" />
        <stop offset=".45" stopColor="#ff9421" />
        <stop offset="1" stopColor="#f0205e" />
      </linearGradient>
    </defs>
    <circle cx="16" cy="15" r="11" fill="#1f55c4" />
    <path d="M20 1c2 3 6 5 8 9 4 9-1 20-12 20.500C6 31 0 24 .8 15c.3-4 1.700-6 3-8l.7 3c1-2 2-5 4-6-.3 2 .5 3 1.500 4 2 0 5 0 5 2-1 2-4 1.500-4 4 2 5 8 5 11 2-1 7-7 9-12 6 6 6 14 2 14-5 0-6-6-7-4-16z" fill="url(#fx)" />
  </svg>
);

const NotepadArt = () => (
  <svg width="30" height="30" viewBox="0 0 30 30">
    <path d="M25 4l3 20-8 5z" fill="#6c5a43" />
    <path d="M20 3h5l2 20-5 5-8-2z" fill="#f4faf9" stroke="#8aa6a8" strokeWidth=".6" />
    <path d="M8 4h14l-5 21L2 20z" fill="#63b4bd" />
    <path d="M8 4h14l-3 10L5 12z" fill="#b5e2e4" opacity=".7" />
    <path d="M9 1v4M12 1v4M15 1v4M18 1v4M21 1v4M24 1v4" stroke="#5e6a6e" />
  </svg>
);

const ControlArt = () => (
  <svg width="33" height="30" viewBox="0 0 33 30">
    <path d="M1 2h31v21H1z" fill="#2b78b9" stroke="#1a5188" />
    <circle cx="9" cy="10" r="4.500" fill="#3f95d4" stroke="#d8f0fc" strokeWidth="1.500" />
    <path d="M9 5a5 5 0 0 1 5 4l-4 1z" fill="#f6b63c" />
    <path d="M18 7h10v3H18zM18 13h10v3H18z" fill="#2a9ee0" stroke="#e3f3fc" />
    <path d="M6 17h2M10 17h2" stroke="#f6b63c" strokeWidth="2" />
    <ellipse cx="17" cy="25" rx="6.500" ry="4.500" fill="#e2e0da" stroke="#8f8f8c" strokeWidth=".7" />
  </svg>
);

const SpeakerArt = () => (
  <svg width="15" height="14" viewBox="0 0 15 14">
    <path d="M1 4.500h2.500L7 1v12L3.500 9.500H1z" fill="#fff" />
    <path d="M9 5c1 1 1 3 0 4M11 3.500c2 2 2 5 0 7M13 2c2.500 3 2.500 7 0 10" fill="none" stroke="#fff" />
  </svg>
);

const NetworkArt = () => (
  <svg width="15" height="14" viewBox="0 0 15 14">
    <path d="M4.500 3.500h10v7h-10z" fill="#1d3f6d" stroke="#fff" />
    <path d="M6 13.500h7M9.500 11v2" stroke="#fff" />
    <path d="M0 2h5v4H0zM1 0v2M4 0v2M2.500 6v6H5" fill="#d5e1ee" stroke="#fff" strokeWidth=".8" />
  </svg>
);

const FlagArt = () => (
  <svg width="15" height="14" viewBox="0 0 15 14">
    <path d="M1.500 0v14" stroke="#fff" />
    <path d="M3 1c3-1 4 1 6 1l5 1-1.500 3 1.500.5C12 8 9 8 8 6.500 6 5.500 4.500 7 3 7z" fill="#fff" />
  </svg>
);

const PlugArt = () => (
  <svg width="11" height="16" viewBox="0 0 11 16">
    <path d="M2 3 3.700.7h3.600L9 3v8H2z" fill="#dbe1e9" stroke="#7f8995" />
    <path d="M4.500 2.500h2V9h-2z" fill="#fff" stroke="#9aa4b0" strokeWidth=".8" />
    <path d="M3 11.500h5V14H3z" fill="#2b93c8" />
    <path d="M4.500 14v2M6.500 14v2" stroke="#1d77a8" />
  </svg>
);

/* ---------- Content ---------- */

const paletteColors = [
  "#000000", "#7f7f7f", "#880015", "#ed1c24", "#ff7f27", "#fff200", "#22b14c", "#00a2e8", "#3f48cc", "#a349a4",
  "#ffffff", "#c3c3c3", "#b97a57", "#ffaec9", "#ffc90e", "#efe4b0", "#b5e61d", "#99d9ea", "#7092be", "#c8bfe7",
  ...Array(10).fill(null),
];

function Shapes() {
  return (
    <Gallery>
      <ShapeGrid>
        {shapes.map((d, i) => (
          <ShapeButton key={i} aria-label={`Shape ${i + 1}`}>
            <svg width="18" height="17" viewBox="0 0 18 17" fill="none" stroke="#2a69a8">
              <path d={d} />
            </svg>
          </ShapeButton>
        ))}
      </ShapeGrid>
      <GalleryScroll>
        <ScrollButton aria-label="Scroll up"><Arrow up color="#a3adbb" /></ScrollButton>
        <ScrollButton aria-label="Scroll down"><Arrow /></ScrollButton>
        <ScrollButton aria-label="More shapes">
          <svg width="7" height="7" viewBox="0 0 7 7"><path d="M0 0h7v1H0zM0 3h7L3.500 6.500z" fill="#3f4f6b" /></svg>
        </ScrollButton>
      </GalleryScroll>
    </Gallery>
  );
}

function Big({ icon, label, arrow = true, dim, ...rest }) {
  return (
    <BigButton $dim={dim} {...rest}>
      <BigIcon>{icon}</BigIcon>
      {label}
      {arrow && <ArrowGap><Arrow color={dim ? "#a3adbb" : undefined} /></ArrowGap>}
    </BigButton>
  );
}

function Small({ icon, label, dim, arrow }) {
  return (
    <SmallButton $dim={dim}>
      <SmallIcon>{icon}</SmallIcon>
      {label}
      {arrow && <Arrow color={dim ? "#a3adbb" : undefined} />}
    </SmallButton>
  );
}

function PaintRibbon() {
  return (
    <Ribbon>
      <Group $w={106}>
        <GroupBody $gap={2} $pad={5}>
          <Big icon={<PasteArt />} label="Paste" />
          <SmallStack>
            <Small dim icon={<CutArt />} label="Cut" />
            <Small dim icon={<CopyArt />} label="Copy" />
          </SmallStack>
        </GroupBody>
        <GroupLabel>Clipboard</GroupLabel>
      </Group>
      <Separator />
      <Group $w={119}>
        <GroupBody $pad={3}>
          <Big $active icon={<SelectArt />} label="Select" />
          <SmallStack>
            <Small dim icon={<CropArt />} label="Crop" />
            <Small icon={<ResizeArt />} label="Resize" />
            <Small arrow icon={<RotateArt />} label="Rotate" />
          </SmallStack>
        </GroupBody>
        <GroupLabel>Image</GroupLabel>
      </Group>
      <Separator />
      <Group $w={78}>
        <GroupBody>
          <ToolGrid>
            <ToolRow>
              <Tool aria-label="Pencil"><PencilArt /></Tool>
              <Tool aria-label="Fill with color"><BucketArt /></Tool>
              <Tool aria-label="Text"><LetterTool>A</LetterTool></Tool>
            </ToolRow>
            <ToolRow>
              <Tool aria-label="Eraser"><EraserArt /></Tool>
              <Tool aria-label="Color picker"><DropperArt /></Tool>
              <Tool aria-label="Magnifier"><LensArt /></Tool>
            </ToolRow>
          </ToolGrid>
        </GroupBody>
        <GroupLabel>Tools</GroupLabel>
      </Group>
      <Separator />
      <Group $w={56}>
        <GroupBody $pad={3}>
          <Big $w={48} icon={<BrushArt />} label="Brushes" />
        </GroupBody>
      </Group>
      <Separator />
      <Group $w={243}>
        <GroupBody>
          <Shapes />
          <SmallStack>
            <Small dim arrow icon={<OutlineArt />} label="Outline" />
            <Small dim arrow icon={<BucketArt dim />} label="Fill" />
          </SmallStack>
        </GroupBody>
        <GroupLabel>Shapes</GroupLabel>
      </Group>
      <Separator />
      <Group $w={51}>
        <GroupBody>
          <Big dim icon={<SizeArt />} label="Size" />
        </GroupBody>
      </Group>
      <Separator />
      <Group $w={355}>
        <GroupBody $gap={0}>
          <Big $active arrow={false} icon={<Swatch $size={32} $color="#000" />} label={<>Color<br />1</>} />
          <Big $w={43} arrow={false} icon={<Swatch $size={24} $color="#fff" />} label={<>Color<br />2</>} />
          <Palette>
            {paletteColors.map((c, i) => (
              <PaletteCell key={i} $color={c} aria-label={c || "Empty color"} />
            ))}
          </Palette>
          <Big $w={44} arrow={false} icon={<EditColorsArt />} label={<>Edit<br />colors</>} />
        </GroupBody>
        <GroupLabel>Colors</GroupLabel>
      </Group>
      <Separator />
    </Ribbon>
  );
}

function AddressList({ heads, rows, selected }) {
  return (
    <ListBox>
      <List>
        <thead>
          <tr>{heads.map((h) => <th key={h} scope="col">{h}</th>)}</tr>
        </thead>
        <tbody>
          {rows.map((row, r) => (
            <tr key={row[0]}>
              {row.map((v, c) => <td key={c}><Cell $selected={selected === r && c === 0}>{v}</Cell></td>)}
            </tr>
          ))}
        </tbody>
      </List>
    </ListBox>
  );
}

function PaleClose() {
  return (
    <WinButtons $pale>
      <WinButton $w={45} $bg="linear-gradient(#ffffff90, #e3f6fb90)" aria-label="Close"><Cross fill="#f4f8fa" stroke="#5b656e" /></WinButton>
    </WinButtons>
  );
}

const glassPale = "linear-gradient(90deg, #fff 0, #fff 322px, #cdeaf5 323px, #cfeaf6 100%)";
const glassCyan = "linear-gradient(180deg, #e3fbff 0, #f4ffff 10%, #effdff 60%, #d3f8fa 100%)";
const glassActive =
  "linear-gradient(#ffffff80 0, #ffffff00 10px) top / 100% 28px no-repeat, linear-gradient(90deg, #d5e4f4 0, #c3d8ef 22%, #a9c9ea 40%, #b3d1ee 65%, #cfe3f7 82%, #c0d3e8 86%, #c9dcf0 100%) top / 100% 29px no-repeat, linear-gradient(#d3e2f3 0, #dde9f5 140px, #a5c6ea 143px, #a9cbee 100%)";

function AdvancedWindow() {
  return (
    <Win $active $x={517} $y={230} $w={414} $h={494} $glass={glassActive} aria-label="Advanced TCP/IP Settings">
      <WinTitle>
        <WinName>Advanced TCP/IP Settings</WinName>
        <WinButtons>
          <WinButton $w={28} $bg="linear-gradient(#e1e7ee, #c3cdd9 48%, #8e9dae 52%, #b2c0cf)" aria-label="Help">
            <svg width="10" height="13" viewBox="0 0 10 13" fill="none">
              <path d="M2 5C2 1.200 8 1.200 8 4.700 8 6.500 5 6.500 5 9M5 9.700v2.500" stroke="#3f4854" strokeWidth="3.400" />
              <path d="M2 4.500C2 1.500 8 1.500 8 4.700 8 6.500 5 6.500 5 8.500M5 10v1.600" stroke="#fff" strokeWidth="1.700" />
            </svg>
          </WinButton>
          <WinButton $w={47} $bg="linear-gradient(#e9a79a, #d5705d 46%, #b92b16 52%, #d1583a)" aria-label="Close"><Cross stroke="#5d2a26" /></WinButton>
        </WinButtons>
      </WinTitle>
      <WinBody $pad="7px 8px 8px 6px">
        <Tabs role="tablist">
          <Tab $active $w={68} role="tab">IP Settings</Tab>
          <Tab $first $w={40} role="tab">DNS</Tab>
          <Tab $w={41} role="tab">WINS</Tab>
        </Tabs>
        <TabPage>
          <Fields>
            <Legend>IP add<u>r</u>esses</Legend>
            <AddressList
              heads={["IP address", "Subnet mask"]}
              rows={[["192.168.1.1", "255.255.255.0"], ["10.10.10.1", "255.0.0.0"]]}
            />
            <ButtonRow>
              <PushButton $focused><u>A</u>dd...</PushButton>
              <PushButton><u>E</u>dit...</PushButton>
              <PushButton>Remo<u>v</u>e</PushButton>
            </ButtonRow>
          </Fields>
          <Fields $after={13}>
            <Legend>De<u>f</u>ault gateways:</Legend>
            <AddressList heads={["Gateway", "Metric"]} rows={[["192.168.1.0", "Automatic"]]} selected={0} />
            <ButtonRow>
              <PushButton>A<u>d</u>d...</PushButton>
              <PushButton>Edi<u>t</u>...</PushButton>
              <PushButton>Re<u>m</u>ove</PushButton>
            </ButtonRow>
          </Fields>
          <Fields $pad="6px 10px 7px 10px">
            <CheckLegend>
              <CheckBox>
                <Check id="auto-metric" type="checkbox" defaultChecked />
                <svg width="9" height="9" viewBox="0 0 9 9"><path d="M1 4.500 3.500 7.500 8 .8" fill="none" stroke="#46538f" strokeWidth="1.900" /></svg>
              </CheckBox>
              <label htmlFor="auto-metric">A<u>u</u>tomatic metric</label>
            </CheckLegend>
            <MetricRow>
              <span>I<u>n</u>terface metric:</span>
              <MetricInput disabled />
            </MetricRow>
          </Fields>
        </TabPage>
        <ButtonRow $top={8}>
          <PushButton>OK</PushButton>
          <PushButton>Cancel</PushButton>
        </ButtonRow>
      </WinBody>
    </Win>
  );
}

export default function App() {
  return (
    <>
      <Global />
      <Desktop>
        <TitleBar>
          <QuickAccess>
            <QuickButton aria-label="Paint menu"><PaletteArt /></QuickButton>
            <QuickDivider />
            <QuickButton aria-label="Save"><SaveArt /></QuickButton>
            <QuickButton aria-label="Undo"><UndoArt /></QuickButton>
            <QuickButton aria-label="Redo"><UndoArt flip /></QuickButton>
            <QuickButton aria-label="Customize">
              <svg width="7" height="6" viewBox="0 0 7 6"><path d="M0 0h7v1H0zM0 2h7L3.500 6z" fill="#111" /></svg>
            </QuickButton>
            <QuickDivider />
            <AppTitle>Untitled - Paint</AppTitle>
          </QuickAccess>
          <Caption>
            <CaptionButton $w={28} aria-label="Minimize">
              <svg width="12" height="5" viewBox="0 0 12 5"><path d="M.5.5h11v4H.5z" fill="#fff" stroke="#4a5d78" /></svg>
            </CaptionButton>
            <CaptionButton $w={27} aria-label="Restore">
              <svg width="12" height="12" viewBox="0 0 12 12" fill="#fff" stroke="#4a5d78">
                <path d="M3.500.5h8v8h-8z" />
                <path d="M.5 2.500h8v9h-8z" />
                <path d="M3.500 5.500h2v3h-2z" fill="#8aa9ca" />
              </svg>
            </CaptionButton>
            <CaptionButton $w={46} aria-label="Close"><Cross stroke="#4a5d78" /></CaptionButton>
          </Caption>
        </TitleBar>
        <TabStrip>
          <FileButton aria-label="Paint"><FileArt /><svg width="7" height="4" viewBox="0 0 7 4"><path d="M0 0h7L3.500 4z" fill="#fff" /></svg></FileButton>
          <RibbonTab $active>Home</RibbonTab>
          <RibbonTab>View</RibbonTab>
          <HelpButton aria-label="Help"><HelpArt /></HelpButton>
        </TabStrip>
        <PaintRibbon />
        <WorkArea>
          <Sheet><SheetHandle /></Sheet>
        </WorkArea>
        <StatusBar>
          <StatusCell $pad={4}><MoveArt /></StatusCell>
          <StatusCell><DimsArt dashed /></StatusCell>
          <StatusCell><DimsArt />768 × 460px</StatusCell>
          <ZoomArea>
            100%
            <button aria-label="Zoom out"><ZoomArt /></button>
            <ZoomSlider type="range" defaultValue={50} aria-label="Zoom" />
            <button aria-label="Zoom in"><ZoomArt plus /></button>
          </ZoomArea>
        </StatusBar>
        <Taskbar>
          <TaskButton $w={54} aria-label="Start"><StartArt /></TaskButton>
          <TaskButton $w={70} aria-label="Internet Explorer"><IeArt /></TaskButton>
          <TaskButton $w={54} aria-label="Windows Explorer"><ExplorerArt /></TaskButton>
          <TaskButton $w={67} aria-label="Media Player"><MediaArt /></TaskButton>
          <TaskButton $open $w={60} $gap={3} aria-label="Chrome"><ChromeArt /></TaskButton>
          <TaskButton $w={58} $gap={3} aria-label="Firefox"><FirefoxArt /></TaskButton>
          <TaskButton $open $w={60} $gap={2} aria-label="Notepad"><NotepadArt /></TaskButton>
          <TaskButton $open $lit $stacked $w={52} $gap={10} aria-label="Network settings"><ControlArt /></TaskButton>
          <TaskButton $open $w={60} aria-label="Paint"><PaletteArt size={32} /></TaskButton>
          <Tray>
            <TrayButton aria-label="Show hidden icons"><svg width="8" height="4" viewBox="0 0 8 4"><path d="M0 4h8L4 0z" fill="#fff" /></svg></TrayButton>
            <TrayButton aria-label="Volume"><SpeakerArt /></TrayButton>
            <TrayButton aria-label="Network"><NetworkArt /></TrayButton>
            <TrayButton aria-label="Action Center"><FlagArt /></TrayButton>
            <Clock>3:57 PM<br />2/24/2018</Clock>
            <ShowDesktop aria-label="Show desktop" />
          </Tray>
        </Taskbar>

        <Win $x={451} $y={156} $w={377} $h={455} $glass={glassPale} aria-label="Local Area Connection Status">
          <WinTitle>
            <WinName $icon><PlugArt />Local Area Connection Status</WinName>
            <PaleClose />
          </WinTitle>
          <WinBody><BackPage /></WinBody>
        </Win>
        <Win $x={467} $y={172} $w={377} $h={474} $glass={glassCyan} aria-label="Local Area Connection Properties">
          <WinTitle>
            <WinName $icon><PlugArt />Local Area Connection Properties</WinName>
            <PaleClose />
          </WinTitle>
          <WinBody $pad="7px 6px 38px 6px">
            <Tabs><Tab $active $w={70}>Networking</Tab></Tabs>
            <BackPage>
              <BackText>Co</BackText>
              <BackBox $top={5} $h={30} $r={3} $line="#b9bcc2" />
              <BackText $top={30}>T</BackText>
              <BackBox $top={6} $h={140} />
              <BackBox $top={8} $h={21} $r={3} />
              <BackBox $top={11} $h={60} $r={4} $line="#d8dde0" />
            </BackPage>
          </WinBody>
        </Win>
        <Win $x={501} $y={247} $w={414} $h={461} $glass={glassCyan} aria-label="Internet Protocol Properties">
          <WinTitle><WinName>In</WinName></WinTitle>
          <WinBody $pad="7px 6px 38px 6px"><BackPage /></WinBody>
        </Win>
        <AdvancedWindow />
      </Desktop>
    </>
  );
}
